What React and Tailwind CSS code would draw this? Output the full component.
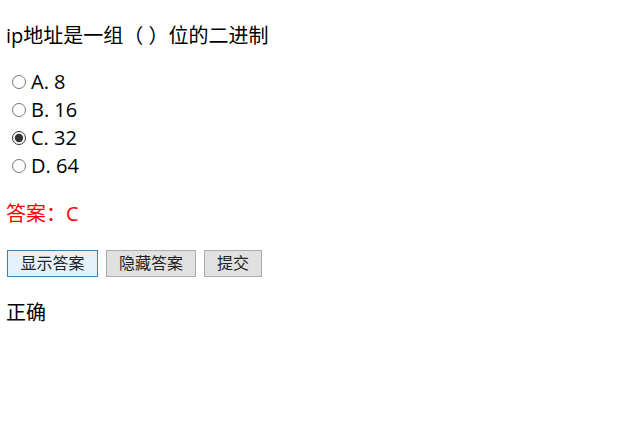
import { useState } from 'react';

export default function App() {
  const [picked, setPicked] = useState('C');
  const options = [
    { key: 'A', label: 'A. 8' },
    { key: 'B', label: 'B. 16' },
    { key: 'C', label: 'C. 32' },
    { key: 'D', label: 'D. 64' },
  ];

  return (
    <div className="min-h-[422px] bg-white px-[6px] pt-[22px] text-[20px] text-black [font-family:'Open_Sans','Noto_Sans_CJK_SC',sans-serif]">
      <p className="h-[28px] leading-[28px]">ip地址是一组（ ）位的二进制</p>

      <div className="mt-[18px] flex flex-col">
        {options.map((o) => (
          <label key={o.key} className="flex h-[28px] items-center">
            <input
              type="radio"
              name="q"
              checked={picked === o.key}
              onChange={() => setPicked(o.key)}
              className="ml-[6px] mr-[5px] h-[14px] w-[14px] accent-[#333]"
            />
            <span className="leading-[28px]">{o.label}</span>
          </label>
        ))}
      </div>

      <p className="mt-[20px] h-[28px] leading-[28px] text-[#f00]">答案：C</p>

      <div className="mt-[22px] flex gap-[8px] pl-[1px] text-[16px] text-[#222]">
        <button className="h-[27px] w-[91px] border border-[#3c7fb1] bg-[#e5f1fb] leading-[25px]">显示答案</button>
        <button className="h-[27px] w-[90px] border border-[#adadad] bg-[#e1e1e1] leading-[25px]">隐藏答案</button>
        <button className="h-[27px] w-[58px] border border-[#adadad] bg-[#e1e1e1] leading-[25px]">提交</button>
      </div>

      <p className="mt-[22px] h-[28px] leading-[28px]">正确</p>
    </div>
  );
}
